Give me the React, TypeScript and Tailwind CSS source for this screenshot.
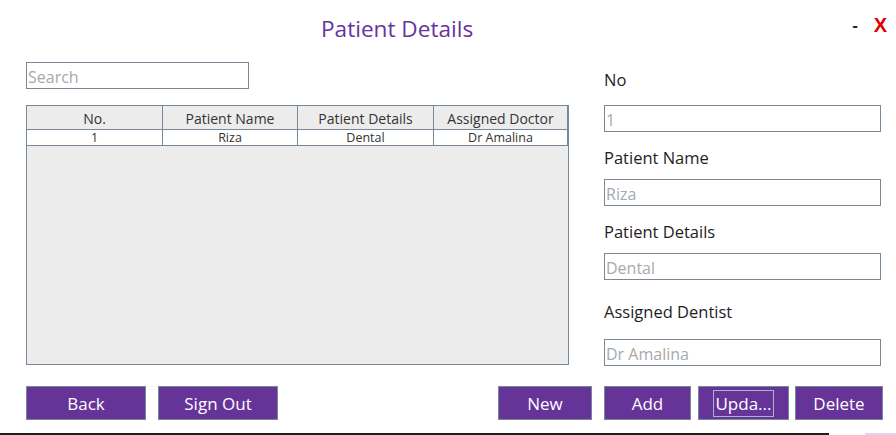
import React from 'react';

const columns = ['No.', 'Patient Name', 'Patient Details', 'Assigned Doctor'];
const rows = [['1', 'Riza', 'Dental', 'Dr Amalina']];

const fields = [
  { label: 'No', value: '1', labelMt: 'mt-[6px]', inputMt: 'mt-[13px]' },
  { label: 'Patient Name', value: 'Riza', labelMt: 'mt-[14px]', inputMt: 'mt-[9px]' },
  { label: 'Patient Details', value: 'Dental', labelMt: 'mt-[14px]', inputMt: 'mt-[9px]' },
  { label: 'Assigned Dentist', value: 'Dr Amalina', labelMt: 'mt-[20px]', inputMt: 'mt-[15px]' },
];

function PurpleButton({ label, className, focused }: { label: string; className: string; focused?: boolean }) {
  return (
    <button
      className={`h-[34px] border border-[#778899] bg-[#663399] text-white text-[17px] leading-none flex items-center justify-center ${className}`}
    >
      {focused ? (
        <span className="border border-[#a8b4c4] px-[1px] h-[27px] flex items-center">{label}</span>
      ) : (
        label
      )}
    </button>
  );
}

export default function App() {
  return (
    <div className="w-[896px] h-[435px] bg-white flex flex-col overflow-hidden font-['Open_Sans',sans-serif] text-[#1e1e1e]">
      {/* title bar */}
      <div className="h-[62px] flex items-start">
        <div className="ml-[321px] mt-[14px] text-[22.6px] text-[#6633a0] leading-[30px]">Patient Details</div>
        <div className="ml-auto mr-[9px] mt-[13px] flex items-center gap-[16px]">
          <span className="text-[16px] font-bold text-[#222]">-</span>
          <span className="text-[20px] leading-[24px] font-bold text-[#e00000] font-['Liberation_Sans',sans-serif]">X</span>
        </div>
      </div>

      <div className="flex pl-[26px]">
        {/* left: search + grid */}
        <div className="w-[543px]">
          <div className="w-[223px] h-[27px] border border-[#778899] flex items-center px-[1px] pt-[2px] text-[16px] text-[#a9a9a9]">
            Search
          </div>
          <div className="mt-[16px] w-[543px] h-[260px] border border-[#778899] bg-[#ececec]">
            <div className="grid grid-cols-[136px_135px_136px_134px]">
              {columns.map((c) => (
                <div
                  key={c}
                  className="h-[24px] flex items-center justify-center pt-[2px] text-[14px] text-[#333] border-b border-r border-[#778899]"
                >
                  {c}
                </div>
              ))}
              {rows.map((r) =>
                r.map((v, i) => (
                  <div
                    key={i}
                    className="h-[16px] bg-white flex items-center justify-center pt-[1px] text-[12.5px] text-[#333] border-b border-r border-[#778899]"
                  >
                    {v}
                  </div>
                ))
              )}
            </div>
          </div>
        </div>

        {/* right: form */}
        <div className="ml-[35px] w-[277px] flex flex-col">
          {fields.map((f) => (
            <React.Fragment key={f.label}>
              <div className={`${f.labelMt} h-[24px] leading-[24px] text-[16.5px]`}>{f.label}</div>
              <div
                className={`${f.inputMt} h-[27px] border border-[#778899] flex items-center px-[1px] pt-[2px] text-[16px] text-[#a9a9a9]`}
              >
                {f.value}
              </div>
            </React.Fragment>
          ))}
        </div>
      </div>

      {/* buttons */}
      <div className="mt-[20px] flex pl-[26px]">
        <PurpleButton label="Back" className="w-[120px]" />
        <PurpleButton label="Sign Out" className="w-[120px] ml-[12px]" />
        <PurpleButton label="New" className="w-[94px] ml-[220px]" />
        <PurpleButton label="Add" className="w-[87px] ml-[12px]" />
        <PurpleButton label="Upda..." className="w-[91px] ml-[7px]" focused />
        <PurpleButton label="Delete" className="w-[88px] ml-[6px]" />
      </div>

      <div className="mt-auto h-[2px] flex">
        <div className="w-[829px] bg-[#1f1f1f]" />
        <div className="w-[36px]" />
        <div className="flex-1 bg-[#ddd6ee]" />
      </div>
    </div>
  );
}
